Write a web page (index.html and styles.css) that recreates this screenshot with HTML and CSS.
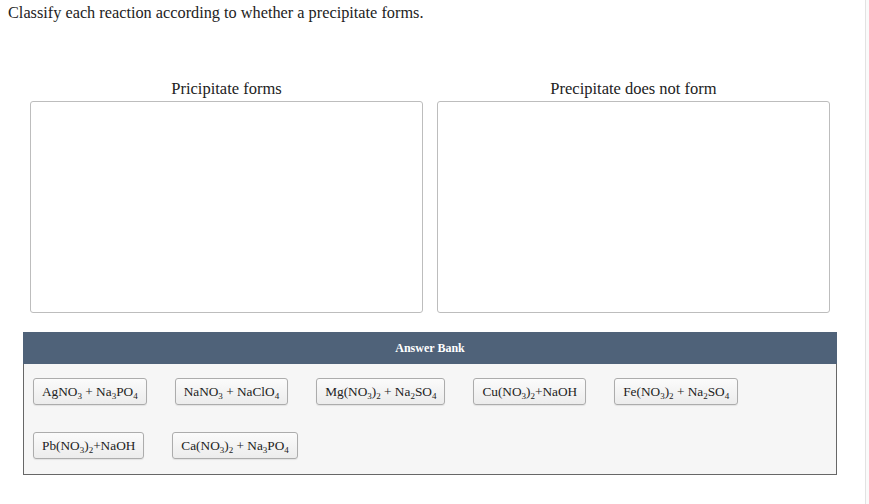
FILE: index.html
```html
<!DOCTYPE html>
<html lang="en">
<head>
    <meta charset="UTF-8">
    <title>Classify Reactions</title>
    <link rel="stylesheet" href="styles.css">
</head>
<body>

<div class="page">
    <p class="prompt">Classify each reaction according to whether a precipitate forms.</p>

    <div class="targets">
        <div class="target">
            <h2>Pricipitate forms</h2>
            <div class="drop-box"></div>
        </div>
        <div class="target">
            <h2>Precipitate does not form</h2>
            <div class="drop-box"></div>
        </div>
    </div>

    <div class="bank">
        <div class="bank-title">Answer Bank</div>
        <div class="bank-items">
            <span class="chip">AgNO<sub>3</sub> + Na<sub>3</sub>PO<sub>4</sub></span>
            <span class="chip">NaNO<sub>3</sub> + NaClO<sub>4</sub></span>
            <span class="chip">Mg(NO<sub>3</sub>)<sub>2</sub> + Na<sub>2</sub>SO<sub>4</sub></span>
            <span class="chip">Cu(NO<sub>3</sub>)<sub>2</sub>+NaOH</span>
            <span class="chip">Fe(NO<sub>3</sub>)<sub>2</sub> + Na<sub>2</sub>SO<sub>4</sub></span>
            <span class="chip">Pb(NO<sub>3</sub>)<sub>2</sub>+NaOH</span>
            <span class="chip">Ca(NO<sub>3</sub>)<sub>2</sub> + Na<sub>3</sub>PO<sub>4</sub></span>
        </div>
    </div>
</div>

</body>
</html>
```

FILE: styles.css
```css
html {
    background-color: #fafafa;
}

body {
    margin: 0;
    padding: 0;
    font-family: "Liberation Serif", Tinos, Times, "DejaVu Serif", serif;
    color: #222;
}

.page {
    width: 866px;
    min-height: 504px;
    box-sizing: border-box;
    padding: 4px 0 0 8px;
    background-color: #fff;
    border-right: 1px solid #e2e2e2;
}

.prompt {
    margin: 0;
    font-size: 16.3px;
    line-height: 18px;
}

.targets {
    display: flex;
    gap: 14px;
    margin: 58px 0 0 22px;
}

.target {
    width: 393px;
}

.target h2 {
    margin: 0 0 4px;
    font-size: 16.5px;
    font-weight: normal;
    line-height: 17px;
    text-align: center;
}

.drop-box {
    height: 212px;
    box-sizing: border-box;
    border: 1px solid #bdbdbd;
    border-radius: 3px;
    background-color: #fff;
}

.bank {
    width: 814px;
    margin: 19px 0 0 15px;
    box-sizing: border-box;
    border: 1px solid #676767;
    border-top: none;
    background-color: #f6f6f6;
}

.bank-title {
    height: 32px;
    line-height: 32px;
    margin: 0 -1px;
    background-color: #4f6279;
    color: #fff;
    font-size: 12px;
    font-weight: bold;
    text-align: center;
}

.bank-items {
    display: flex;
    flex-wrap: wrap;
    gap: 27px 28px;
    padding: 14px 9px 15px;
}

.chip {
    height: 27px;
    line-height: 25px;
    box-sizing: border-box;
    padding: 0 8px;
    border: 1px solid #acacac;
    border-radius: 3px;
    background: linear-gradient(#fbfbfb, #ececec);
    box-shadow: 0 1px 1px rgba(0, 0, 0, 0.08);
    font-size: 13.3px;
    color: #222;
    white-space: nowrap;
}

.chip sub {
    font-size: 9px;
    line-height: 0;
    vertical-align: -3px;
}
```
